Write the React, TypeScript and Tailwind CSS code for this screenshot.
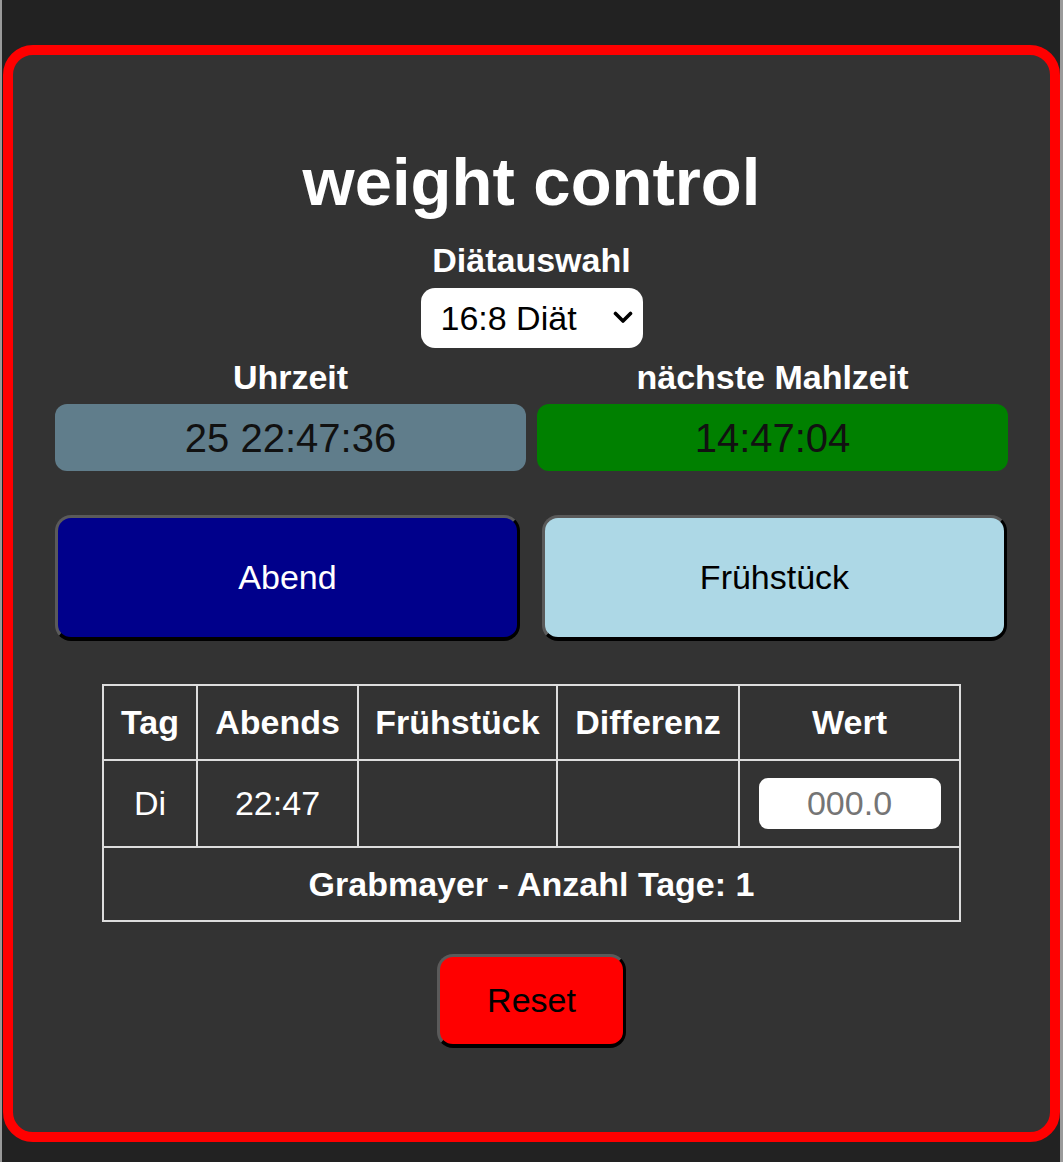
import { useState } from 'react';

const FONT = "font-['Liberation_Sans',Arial,Helvetica,sans-serif]";

export default function App() {
  const [diet, setDiet] = useState('16:8');
  const [weight, setWeight] = useState('');

  return (
    <div
      className={`min-h-[1162px] bg-[#222] border-l-2 border-r-[3px] border-[#9a9a9a] pt-[45px] pb-[20px] ${FONT}`}
    >
      <div className="ml-px h-[1097px] rounded-[30px] border-[10px] border-[#ff0000] bg-[#333] px-[42px] pt-[88px] text-white">
        {/* Title */}
        <h1 className="text-center text-[67px] font-bold leading-[77px]">weight control</h1>

        {/* Diet selection */}
        <div className="mt-[21px] flex flex-col items-center">
          <div className="text-[34px] font-bold leading-[39px]">Diätauswahl</div>
          <div className="relative mt-[8px] h-[60px] w-[222px]">
            <select
              value={diet}
              onChange={(e) => setDiet(e.target.value)}
              className="h-full w-full appearance-none rounded-[14px] bg-white pl-[20px] text-[34px] leading-[39px] text-black outline-none"
            >
              <option value="16:8">16:8 Diät</option>
              <option value="18:6">18:6 Diät</option>
              <option value="20:4">20:4 Diät</option>
            </select>
            <svg
              className="pointer-events-none absolute right-[10px] top-[23px]"
              width="20"
              height="13"
              viewBox="0 0 20 13"
              fill="none"
            >
              <path d="M2.5 2.5 L10 10 L17.5 2.5" stroke="black" strokeWidth="3.6" strokeLinecap="round" strokeLinejoin="round" />
            </svg>
          </div>
        </div>

        {/* Clock / next meal */}
        <div className="mt-[10px] grid grid-cols-2 gap-x-[11px]">
          <div className="flex flex-col items-center">
            <div className="text-[34px] font-bold leading-[39px]">Uhrzeit</div>
            <div className="mt-[7px] flex h-[67px] w-full items-center justify-center rounded-[12px] bg-[#607d8b] text-[40px] leading-[46px] text-[#111]">
              25 22:47:36
            </div>
          </div>
          <div className="flex flex-col items-center">
            <div className="text-[34px] font-bold leading-[39px]">nächste Mahlzeit</div>
            <div className="mt-[7px] flex h-[67px] w-full items-center justify-center rounded-[12px] bg-[#008000] text-[40px] leading-[46px] text-[#111]">
              14:47:04
            </div>
          </div>
        </div>

        {/* Meal buttons */}
        <div className="mt-[44px] grid grid-cols-2 gap-x-[22px] pr-[1px]">
          <button className="h-[126px] rounded-[16px] border-[3px] border-t-[#5a5a5a] border-l-[#5a5a5a] border-r-black border-b-[4px] border-b-black bg-[#00008b] text-[34px] text-white">
            Abend
          </button>
          <button className="h-[126px] rounded-[16px] border-[3px] border-t-[#5a5a5a] border-l-[#5a5a5a] border-r-black border-b-[4px] border-b-black bg-[#add8e6] text-[34px] text-black">
            Frühstück
          </button>
        </div>

        {/* Log table */}
        <div className="mt-[43px] flex justify-center">
          <table className="border-collapse text-[34px] leading-[39px]">
            <thead>
              <tr>
                <th className="w-[94px] border-2 border-[#ddd] p-[17px] font-bold">Tag</th>
                <th className="w-[161px] border-2 border-[#ddd] p-[17px] font-bold">Abends</th>
                <th className="w-[199px] border-2 border-[#ddd] px-[15px] py-[17px] font-bold">Frühstück</th>
                <th className="w-[182px] border-2 border-[#ddd] p-[17px] font-bold">Differenz</th>
                <th className="w-[221px] border-2 border-[#ddd] p-[17px] font-bold">Wert</th>
              </tr>
            </thead>
            <tbody>
              <tr>
                <td className="border-2 border-[#ddd] p-[17px] text-center">Di</td>
                <td className="border-2 border-[#ddd] p-[17px] text-center">22:47</td>
                <td className="border-2 border-[#ddd] p-[17px] text-center"></td>
                <td className="border-2 border-[#ddd] p-[17px] text-center"></td>
                <td className="border-2 border-[#ddd] p-[17px] text-center">
                  <input
                    value={weight}
                    onChange={(e) => setWeight(e.target.value)}
                    placeholder="000.0"
                    className="h-[51px] w-[182px] rounded-[9px] bg-white text-center text-[34px] text-black outline-none placeholder:text-[#757575]"
                  />
                </td>
              </tr>
              <tr>
                <td colSpan={5} className="border-2 border-[#ddd] px-[17px] pt-[17px] pb-[16px] text-center font-bold">
                  Grabmayer - Anzahl Tage: 1
                </td>
              </tr>
            </tbody>
          </table>
        </div>

        {/* Reset */}
        <div className="mt-[32px] flex justify-center">
          <button className="h-[94px] w-[189px] rounded-[16px] border-[3px] border-t-[#5a5a5a] border-l-[#5a5a5a] border-r-black border-b-[4px] border-b-black bg-[#ff0000] text-[34px] text-black">
            Reset
          </button>
        </div>
      </div>
    </div>
  );
}
